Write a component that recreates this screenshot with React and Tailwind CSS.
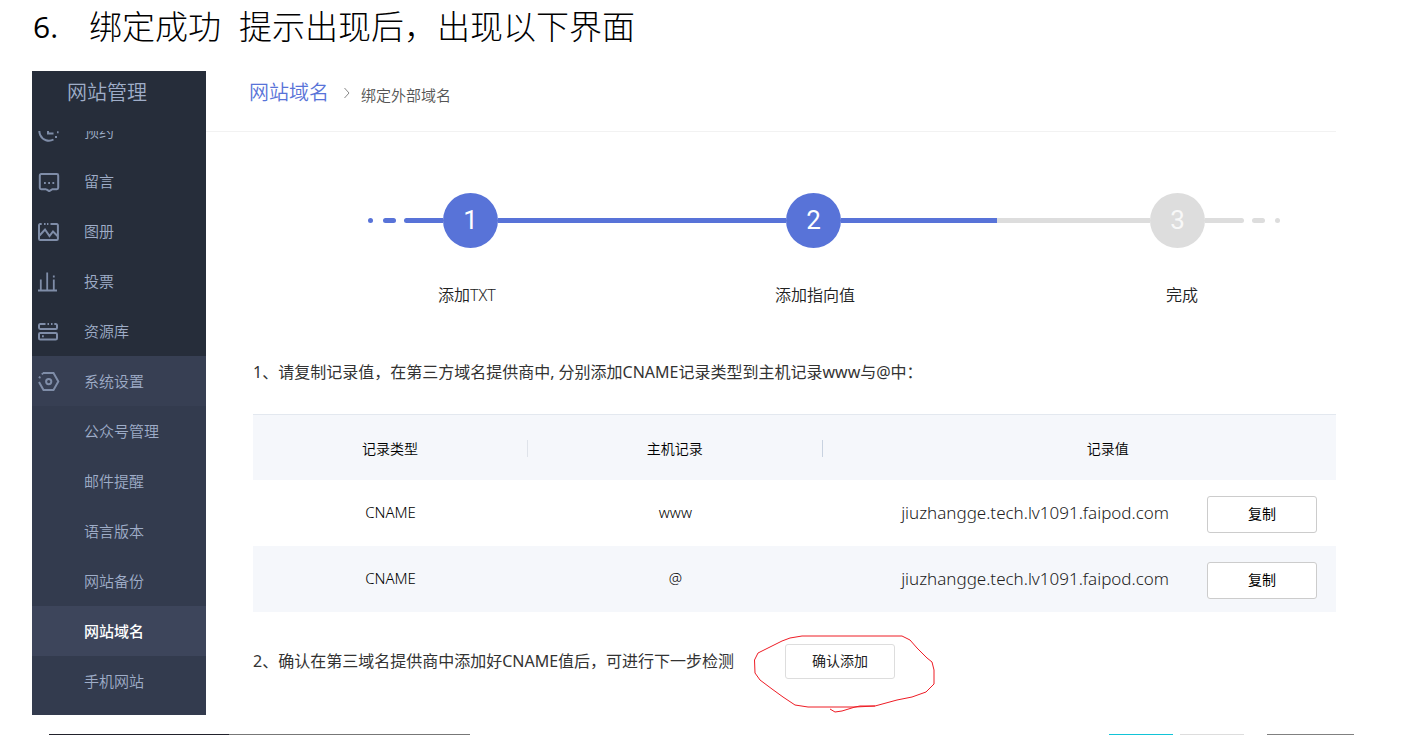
import React from "react";

const iconProps = {
  width: 22,
  height: 22,
  viewBox: "0 0 22 22",
  fill: "none",
  stroke: "currentColor",
  strokeWidth: 2,
  "aria-hidden": true,
};

const ClockIcon = () => (
  <svg {...iconProps}>
    <path d="M20 8.5A9.5 9.5 0 1 0 15.500 19.500" />
    <path d="M10 7v6.5h5.5" />
    <path d="M19 12.2h1.6M17 17h2" />
  </svg>
);

const MessageIcon = () => (
  <svg {...iconProps}>
    <path d="M8 19.2H3.2a1.4 1.4 0 0 1-1.4-1.4V5.4A1.4 1.4 0 0 1 3.2 4h15.6a1.4 1.4 0 0 1 1.4 1.4v12.4a1.4 1.4 0 0 1-1.4 1.4h-4.4l-3.2 2-3.2-2" />
    <path d="M6 13h1.8M10.2 13H12M14.4 13h1.8" />
  </svg>
);

const ImageIcon = () => (
  <svg {...iconProps}>
    <path d="M12.5 4h6.200a1.200 1.200 0 0 1 1.200 1.200v13.600a1.200 1.200 0 0 1-1.200 1.200H2.200A1.200 1.200 0 0 1 1 18.800V5.200A1.200 1.200 0 0 1 2.200 4h1.500M6 4h1.600M9 4h1.400" />
    <path d="M1.500 15.500 7 9.500l4.500 6.500 3.500-4.500 4.500 4.500" />
  </svg>
);

const VoteIcon = () => (
  <svg {...iconProps} strokeWidth={1.8}>
    <path d="M0 20.500h19M2.800 20.500V9.500M9.200 20.500V2.500M15.800 20.500V9.500M15.800 5.500v2" />
  </svg>
);

const LibraryIcon = () => (
  <svg {...iconProps}>
    <path d="M7.500 4H2.200A1.300 1.300 0 0 0 1 5.300v2.400A1.300 1.300 0 0 0 2.200 9h15.600A1.300 1.300 0 0 0 19 7.700V5.300A1.300 1.300 0 0 0 17.800 4h-1.500M9.500 4h1.500M13 4h1.500" />
    <rect x="1" y="13" width="18" height="6.500" rx="1.300" />
    <path d="M4 16.200h1.800" />
  </svg>
);

const SettingsIcon = () => (
  <svg {...iconProps}>
    <path d="M5 3h10.500l4.800 8.500-4.800 8.500H5.500L1 12M1.200 8.200l.9-1.600M4 4.500 5 3" />
    <circle cx="10.700" cy="11.600" r="2.600" />
  </svg>
);

const topItems = [
  { label: "预约", Icon: ClockIcon },
  { label: "留言", Icon: MessageIcon },
  { label: "图册", Icon: ImageIcon },
  { label: "投票", Icon: VoteIcon },
  { label: "资源库", Icon: LibraryIcon },
];

const subItems = ["公众号管理", "邮件提醒", "语言版本", "网站备份", "网站域名", "手机网站"];

const records = [
  { type: "CNAME", host: "www", value: "jiuzhangge.tech.lv1091.faipod.com" },
  { type: "CNAME", host: "@", value: "jiuzhangge.tech.lv1091.faipod.com" },
];

function NavItem({ label, Icon, className = "" }) {
  return (
    <a href="#" className={`flex h-[50px] shrink-0 items-center gap-6 pl-1.5 ${className}`}>
      <span className="w-[22px] text-[#7f8da8]">{Icon && <Icon />}</span>
      <span>{label}</span>
    </a>
  );
}

function Sidebar() {
  return (
    <aside className="flex w-[174px] shrink-0 flex-col bg-[#262d3a] text-[#9fadc8]">
      <h2 className="flex h-[60px] shrink-0 items-start pl-[35px] pt-1.5 text-xl leading-8 font-[350]">网站管理</h2>
      <nav className="flex flex-col overflow-hidden text-[15px] font-[350]">
        <div className="-mt-[25px] flex flex-col">
          {topItems.map((item) => (
            <NavItem key={item.label} {...item} />
          ))}
          <div className="flex flex-col bg-[#333b4e] pb-[9px]">
            <NavItem label="系统设置" Icon={SettingsIcon} className="bg-[#373f53]" />
            {subItems.map((label) => (
              <NavItem
                key={label}
                label={label}
                className={label === "网站域名" ? "bg-[#3d455b] font-medium text-white" : ""}
              />
            ))}
          </div>
        </div>
      </nav>
    </aside>
  );
}

function StepCircle({ n, done }) {
  return (
    <span
      className={`flex size-[55px] shrink-0 items-center justify-center rounded-full text-[26px] ${
        done ? "bg-[#5873d8] text-white" : "bg-[#dddddd] text-[#f8f8f8]"
      }`}
    >
      {n}
    </span>
  );
}

function Steps() {
  return (
    <div className="pt-[61px]">
      <div className="flex items-center pl-[115px] pr-[56px] font-['Roboto','Liberation_Sans',sans-serif]">
        <span className="mr-[10px] h-[5px] w-[5px] rounded-full bg-[#5873d8]" />
        <span className="mr-2 h-[5px] w-[13px] rounded-full bg-[#5873d8]" />
        <span className="h-[5px] w-[39px] rounded-l-full bg-[#5873d8]" />
        <StepCircle n={1} done />
        <span className="h-[5px] flex-[289] bg-[#5873d8]" />
        <StepCircle n={2} done />
        <span className="h-[5px] flex-[156] bg-[#5873d8]" />
        <span className="h-[5px] flex-[154] bg-[#dddddd]" />
        <StepCircle n={3} />
        <span className="h-[5px] w-[39px] rounded-r-full bg-[#dddddd]" />
        <span className="ml-2 h-[5px] w-[13px] rounded-full bg-[#dddddd]" />
        <span className="ml-[10px] h-[5px] w-[5px] rounded-full bg-[#dddddd]" />
      </div>
      <div className="mt-[35px] grid grid-cols-[270fr_426fr_308fr] pl-[79px] text-center text-base font-[350] text-[#222222]">
        <span>添加TXT</span>
        <span>添加指向值</span>
        <span>完成</span>
      </div>
    </div>
  );
}

function RecordTable() {
  return (
    <table className="w-full table-fixed border-t border-[#e3e8ef] text-center text-black">
      <colgroup>
        <col className="w-[25.4%]" />
        <col className="w-[27.2%]" />
        <col />
      </colgroup>
      <thead>
        <tr className="h-[65px] bg-[#f5f7fb] text-sm leading-[17px]">
          <th className="p-0 pt-0.5 font-[350]">
            <div className="border-r border-[#dfe3ea]">记录类型</div>
          </th>
          <th className="p-0 pt-0.5 font-[350]">
            <div className="border-r border-[#c8d2e0]">主机记录</div>
          </th>
          <th className="p-0 pl-[57px] pt-0.5 font-[350]">记录值</th>
        </tr>
      </thead>
      <tbody>
        {records.map((r) => (
          <tr key={r.host} className="h-[66px] even:bg-[#f5f7fb]">
            <td className="p-0 text-[15px] font-light">{r.type}</td>
            <td className="p-0 text-[15px] font-light">{r.host}</td>
            <td className="p-0 pr-[19px]">
              <div className="flex items-center justify-end gap-[38px]">
                <span className="text-[17px] font-[350] text-[#222222]">{r.value}</span>
                <button type="button" className="mt-[3px] h-[37px] w-[110px] shrink-0 rounded-[3px] border border-[#cccccc] bg-white text-sm">
                  复制
                </button>
              </div>
            </td>
          </tr>
        ))}
      </tbody>
    </table>
  );
}

export default function App() {
  return (
    <div className="overflow-hidden bg-white font-['Noto_Sans','Noto_Sans_CJK_SC',sans-serif]">
      <h1 className="flex h-[71px] items-start gap-[18px] pl-[33px] pt-1 text-[33px] leading-[42px] font-light text-black">
        <span className="w-[38px] font-['Open_Sans',sans-serif] text-[30px] leading-[46px] font-normal">6.</span>
        <span className="font-['Noto_Sans_CJK_SC',sans-serif]">绑定成功</span>
        <span className="font-['Noto_Sans_CJK_SC',sans-serif]">提示出现后，出现以下界面</span>
      </h1>
      <div className="flex pl-8 pr-[86px]">
        <Sidebar />
        <main className="min-w-0 flex-1">
          <header className="flex h-[61px] items-start border-b border-[#f2f2f2] pl-[43px] pt-2 leading-8 font-[350]">
            <a href="#" className="text-xl text-[#5873d8]">网站域名</a>
            <svg width="8" height="12" viewBox="0 0 8 12" className="ml-[14px] mr-[10px] mt-2" fill="none" stroke="#888888" aria-hidden="true">
              <path d="M1.500 1 6 6l-4.500 5" />
            </svg>
            <span className="text-[15px] text-[#555555]">绑定外部域名</span>
          </header>
          <div className="pl-[47px]">
            <Steps />
            <p className="mt-[53px] mb-[30px] text-base font-normal text-[#333333]">
              1、请复制记录值，在第三方域名提供商中, 分别添加CNAME记录类型到主机记录www与@中：
            </p>
            <RecordTable />
            <div className="mt-8 flex items-center gap-[38px]">
              <p className="min-w-[494px] text-base font-normal text-[#333333]">
                2、确认在第三域名提供商中添加好CNAME值后，可进行下一步检测
              </p>
              <div className="relative shrink-0">
                <button type="button" className="h-[35px] w-[110px] rounded-[3px] border border-[#dddddd] bg-white text-sm text-[#222222]">
                  确认添加
                </button>
                <svg
                  width="184"
                  height="80"
                  viewBox="0 0 184 80"
                  className="pointer-events-none absolute -top-[10px] -left-[32px] max-w-none"
                  fill="none"
                  stroke="#ee1c25"
                  aria-hidden="true"
                >
                  <path d="M49 2H149l8 4 7 8 10 10 5 4 2 8v14l-8 8-14 5-15 3-22 6-20 1H55l-13-2-12-8-11-8L7 46l-5-7-.5-13L5 19l12-6 12-6 8-3 12-2" />
                  <path d="m77 75 5 3 7-1 13-4 5-1h15" />
                </svg>
              </div>
            </div>
          </div>
        </main>
      </div>
      <div className="mt-[19px] flex pl-[49px] pr-[68px]" aria-hidden="true">
        <span className="h-px w-[180px] bg-[#22222c]" />
        <span className="h-px w-[241px] bg-[#777777]" />
        <span className="ml-auto h-px w-16 bg-[#12c4d8]" />
        <span className="ml-[7px] h-px w-16 bg-[#dddddd]" />
        <span className="ml-[23px] h-px w-[87px] bg-[#808080]" />
      </div>
    </div>
  );
}
